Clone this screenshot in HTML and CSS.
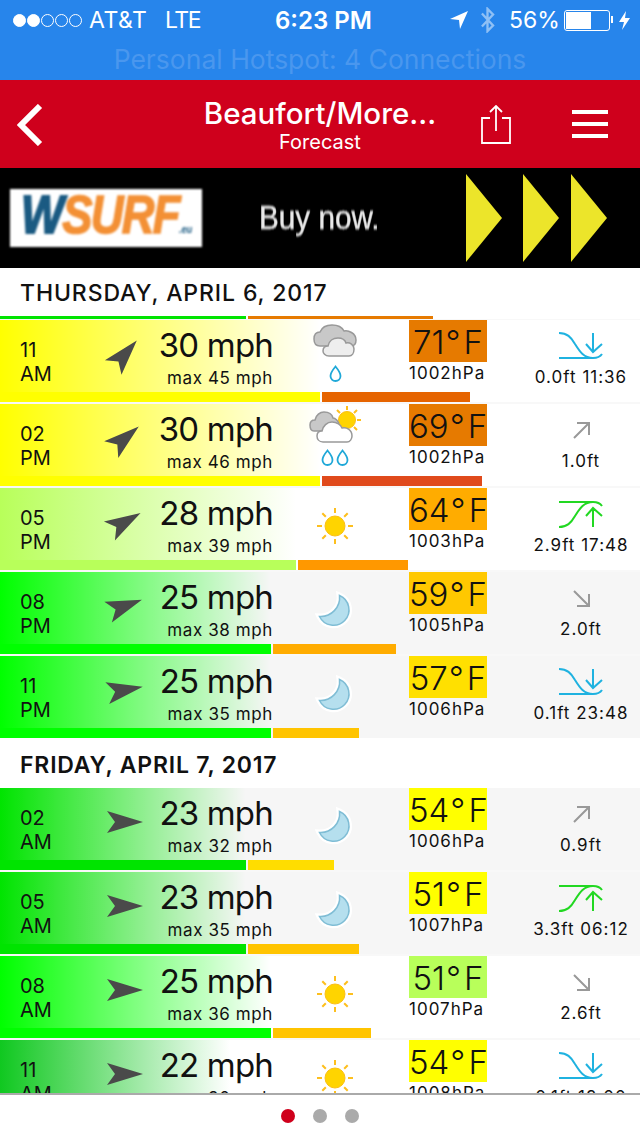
FILE: index.html
```html
<!DOCTYPE html>
<html lang="en">
<head>
    <meta charset="UTF-8">
    <meta name="viewport" content="width=device-width, initial-scale=1.0">
    <title>Forecast</title>
    <link rel="stylesheet" href="styles.css">
</head>
<body>
<svg class="defs" width="0" height="0">
    <symbol id="wind-arrow" viewBox="-20 -20 40 40"><polygon points="18,0 -18,-11 -10,0 -18,11"/></symbol>
    <symbol id="sun" viewBox="-20 -20 40 40">
        <g class="rays"><path d="M0,-18V-13M0,18V13M-18,0H-13M18,0H13M-12.7,-12.7L-9.2,-9.2M12.7,12.7L9.2,9.2M-12.7,12.7L-9.2,9.2M12.7,-12.7L9.2,-9.2"/></g>
        <circle class="disk" r="10"/>
    </symbol>
    <symbol id="moon" viewBox="-20 -20 40 40">
        <path class="halo" d="M4.5,-14.5A15.5,15.5 0 1 1 -15.5,6.5A19,19 0 0 0 4.5,-14.5Z"/>
        <path class="crescent" d="M4.5,-14.5A15.5,15.5 0 1 1 -15.5,6.5A19,19 0 0 0 4.5,-14.5Z"/>
    </symbol>
    <symbol id="cloud" viewBox="0 0 44 33">
        <path class="cloud-back" d="M7,22C2,22 1,18 1,15C1,11 3,8 7,8C9,3 14,1 19,1C25,1 29,3 31,7C35,6 43,9 43,16C43,20 41,22 38,22Z"/>
        <path class="cloud-front" d="M16,32C12,32 10,29 10,27C10,24 12,22 15,22C16,17 20,14 25,14C29,14 32,16 33,19C37,18 41,21 41,25C41,29 39,32 36,32Z"/>
    </symbol>
    <symbol id="cloud-sun" viewBox="0 0 52 38">
        <path class="rays" d="M38,0V4M38,24V28M24,14H28M48,14H52M28,4L31,7M45,21L48,24M28,24L31,21M45,7L48,4"/>
        <circle class="disk" cx="38" cy="14" r="8.500"/>
        <path class="cloud-back" d="M5,25C2,25 1,22 1,19C1,16 3,14 6,14C7,9 11,6 15,6C19,6 23,8 24,12C26,12 30,15 30,19V25Z"/>
        <path class="cloud-white" d="M14,36C10,36 8,33 8,30C8,27 10,25 13,25C14,20 18,16 23,16C28,16 32,19 33,22C38,21 43,24 43,30C43,33 41,36 38,36Z"/>
    </symbol>
    <symbol id="drop" viewBox="0 0 13 17"><path d="M6.500,1.500C6.500,1.500 1.500,7.500 1.500,11A5,5 0 0 0 11.500,11C11.500,7.500 6.500,1.500 6.500,1.500Z"/></symbol>
    <symbol id="tide" viewBox="0 0 44 28"><path d="M0,1C8,1 12,5 16,12C21,20 25,26 34,26C38,26 41,25 43,22M0,26H34M34,1V20M27,12L34,20L43,12"/></symbol>
    <symbol id="tide-arrow" viewBox="0 0 17 17"><path d="M1,16L16,1M4,1H16V13"/></symbol>
</svg>

<header class="status">
    <div class="status-bar">
        <div class="signal"><i class="on"></i><i class="on"></i><i></i><i></i><i></i></div>
        <span class="carrier">AT&amp;T</span>
        <span class="net">LTE</span>
        <span class="clock">6:23 PM</span>
        <svg class="loc" viewBox="0 0 18 18"><polygon points="18,0 0,8 9,9 10,18"/></svg>
        <svg class="bt" viewBox="0 0 16 28"><path d="M2,7L14,20L8,26V2L14,8L2,21"/></svg>
        <span class="pct">56%</span>
        <div class="battery"><div class="battery-fill"></div></div>
        <svg class="bolt" viewBox="0 0 11 19"><polygon points="7,0 0,11 5,11 3,19 11,7 6,7"/></svg>
    </div>
    <div class="hotspot">Personal Hotspot: 4 Connections</div>
</header>

<nav class="nav">
    <svg class="back" viewBox="0 0 26 42"><path d="M23,2L4,21L23,40"/></svg>
    <div class="nav-title">
        <div class="nav-place">Beaufort/More...</div>
        <div class="nav-sub">Forecast</div>
    </div>
    <svg class="share" viewBox="0 0 30 39"><path d="M9,13H1V38H29V13H21M15,26V2M9,7L15,1L21,7"/></svg>
    <div class="menu"><i></i><i></i><i></i></div>
</nav>

<div class="ad">
    <div class="ad-logo">
        <div class="ad-word"><span class="ad-w">W</span><span class="ad-surf">SURF</span><span class="ad-eu">.eu</span></div>
    </div>
    <div class="ad-text">Buy now.</div>
    <div class="ad-arrows"><i></i><i></i><i></i></div>
</div>

<main class="list">
    <h2 class="day">THURSDAY, APRIL 6, 2017</h2>
    <div class="prev-bars"><i class="prev-wind"></i><i class="prev-temp"></i></div>

    <div class="row w-yellow" style="--wind:320px">
        <div class="row-body">
            <div class="time">11<br>AM</div>
            <svg class="arrow" style="transform:rotate(-49deg)"><use href="#wind-arrow"/></svg>
            <div class="wind"><div class="speed">30 mph</div><div class="gust">max 45 mph</div></div>
            <div class="weather">
                <svg class="ico-cloud"><use href="#cloud"/></svg>
                <div class="drops"><svg class="ico-drop"><use href="#drop"/></svg></div>
            </div>
            <div class="temp"><div class="temp-box h-71">71<i>°</i>F</div><div class="hpa">1002<span>hPa</span></div></div>
            <div class="tide"><div class="tide-ico"><svg class="ico-tide low"><use href="#tide"/></svg></div><div class="tide-txt">0.0<span>ft</span> 11:36</div></div>
        </div>
        <div class="bars"><i class="bar-wind"></i><i class="bar-temp b-red1" style="width:148px"></i></div>
    </div>

    <div class="row w-yellow" style="--wind:320px">
        <div class="row-body">
            <div class="time">02<br>PM</div>
            <svg class="arrow" style="transform:rotate(-40deg)"><use href="#wind-arrow"/></svg>
            <div class="wind"><div class="speed">30 mph</div><div class="gust">max 46 mph</div></div>
            <div class="weather">
                <svg class="ico-cloudsun"><use href="#cloud-sun"/></svg>
                <div class="drops two"><svg class="ico-drop"><use href="#drop"/></svg><svg class="ico-drop"><use href="#drop"/></svg></div>
            </div>
            <div class="temp"><div class="temp-box h-71">69<i>°</i>F</div><div class="hpa">1002<span>hPa</span></div></div>
            <div class="tide"><div class="tide-ico"><svg class="ico-dir"><use href="#tide-arrow"/></svg></div><div class="tide-txt">1.0<span>ft</span></div></div>
        </div>
        <div class="bars"><i class="bar-wind"></i><i class="bar-temp b-red2" style="width:160px"></i></div>
    </div>

    <div class="row w-lime" style="--wind:296px">
        <div class="row-body">
            <div class="time">05<br>PM</div>
            <svg class="arrow" style="transform:rotate(-30deg)"><use href="#wind-arrow"/></svg>
            <div class="wind"><div class="speed">28 mph</div><div class="gust">max 39 mph</div></div>
            <div class="weather"><svg class="ico-sun"><use href="#sun"/></svg></div>
            <div class="temp"><div class="temp-box h-64">64<i>°</i>F</div><div class="hpa">1003<span>hPa</span></div></div>
            <div class="tide"><div class="tide-ico"><svg class="ico-tide high"><use href="#tide"/></svg></div><div class="tide-txt">2.9<span>ft</span> 17:48</div></div>
        </div>
        <div class="bars"><i class="bar-wind"></i><i class="bar-temp b-orange" style="width:110px"></i></div>
    </div>

    <div class="row grey w-green" style="--wind:271px">
        <div class="row-body">
            <div class="time">08<br>PM</div>
            <svg class="arrow" style="transform:rotate(-20deg)"><use href="#wind-arrow"/></svg>
            <div class="wind"><div class="speed">25 mph</div><div class="gust">max 38 mph</div></div>
            <div class="weather"><svg class="ico-moon"><use href="#moon"/></svg></div>
            <div class="temp"><div class="temp-box h-59">59<i>°</i>F</div><div class="hpa">1005<span>hPa</span></div></div>
            <div class="tide"><div class="tide-ico"><svg class="ico-dir down"><use href="#tide-arrow"/></svg></div><div class="tide-txt">2.0<span>ft</span></div></div>
        </div>
        <div class="bars"><i class="bar-wind"></i><i class="bar-temp b-amber" style="width:123px"></i></div>
    </div>

    <div class="row grey w-green" style="--wind:271px">
        <div class="row-body">
            <div class="time">11<br>PM</div>
            <svg class="arrow" style="transform:rotate(-10deg)"><use href="#wind-arrow"/></svg>
            <div class="wind"><div class="speed">25 mph</div><div class="gust">max 35 mph</div></div>
            <div class="weather"><svg class="ico-moon"><use href="#moon"/></svg></div>
            <div class="temp"><div class="temp-box h-57">57<i>°</i>F</div><div class="hpa">1006<span>hPa</span></div></div>
            <div class="tide"><div class="tide-ico"><svg class="ico-tide low"><use href="#tide"/></svg></div><div class="tide-txt">0.1<span>ft</span> 23:48</div></div>
        </div>
        <div class="bars"><i class="bar-wind"></i><i class="bar-temp b-gold" style="width:86px"></i></div>
    </div>

    <h2 class="day friday">FRIDAY, APRIL 7, 2017</h2>

    <div class="row grey w-green2" style="--wind:246px">
        <div class="row-body">
            <div class="time">02<br>AM</div>
            <svg class="arrow"><use href="#wind-arrow"/></svg>
            <div class="wind"><div class="speed">23 mph</div><div class="gust">max 32 mph</div></div>
            <div class="weather"><svg class="ico-moon"><use href="#moon"/></svg></div>
            <div class="temp"><div class="temp-box h-54">54<i>°</i>F</div><div class="hpa">1006<span>hPa</span></div></div>
            <div class="tide"><div class="tide-ico"><svg class="ico-dir"><use href="#tide-arrow"/></svg></div><div class="tide-txt">0.9<span>ft</span></div></div>
        </div>
        <div class="bars"><i class="bar-wind"></i><i class="bar-temp b-yellow" style="width:86px"></i></div>
    </div>

    <div class="row grey w-green2" style="--wind:246px">
        <div class="row-body">
            <div class="time">05<br>AM</div>
            <svg class="arrow"><use href="#wind-arrow"/></svg>
            <div class="wind"><div class="speed">23 mph</div><div class="gust">max 35 mph</div></div>
            <div class="weather"><svg class="ico-moon"><use href="#moon"/></svg></div>
            <div class="temp"><div class="temp-box h-54">51<i>°</i>F</div><div class="hpa">1007<span>hPa</span></div></div>
            <div class="tide"><div class="tide-ico"><svg class="ico-tide high"><use href="#tide"/></svg></div><div class="tide-txt">3.3<span>ft</span> 06:12</div></div>
        </div>
        <div class="bars"><i class="bar-wind"></i><i class="bar-temp b-gold" style="width:111px"></i></div>
    </div>

    <div class="row w-green" style="--wind:271px">
        <div class="row-body">
            <div class="time">08<br>AM</div>
            <svg class="arrow"><use href="#wind-arrow"/></svg>
            <div class="wind"><div class="speed">25 mph</div><div class="gust">max 36 mph</div></div>
            <div class="weather"><svg class="ico-sun"><use href="#sun"/></svg></div>
            <div class="temp"><div class="temp-box h-51">51<i>°</i>F</div><div class="hpa">1007<span>hPa</span></div></div>
            <div class="tide"><div class="tide-ico"><svg class="ico-dir down"><use href="#tide-arrow"/></svg></div><div class="tide-txt">2.6<span>ft</span></div></div>
        </div>
        <div class="bars"><i class="bar-wind"></i><i class="bar-temp b-gold" style="width:98px"></i></div>
    </div>

    <div class="row w-green3" style="--wind:230px">
        <div class="row-body">
            <div class="time">11<br>AM</div>
            <svg class="arrow"><use href="#wind-arrow"/></svg>
            <div class="wind"><div class="speed">22 mph</div><div class="gust">max 30 mph</div></div>
            <div class="weather"><svg class="ico-sun"><use href="#sun"/></svg></div>
            <div class="temp"><div class="temp-box h-54">54<i>°</i>F</div><div class="hpa">1008<span>hPa</span></div></div>
            <div class="tide"><div class="tide-ico"><svg class="ico-tide low"><use href="#tide"/></svg></div><div class="tide-txt">0.1<span>ft</span> 12:00</div></div>
        </div>
    </div>
</main>

<footer class="pager"><i class="active"></i><i></i><i></i></footer>
</body>
</html>
```

FILE: styles.css
```css
body {
    margin: 0;
    padding: 0;
    width: 640px;
    height: 1136px;
    display: flex;
    flex-direction: column;
    overflow: hidden;
    background: #fff;
    font-family: Inter, "Liberation Sans", sans-serif;
    color: #111;
}
.defs {
    position: absolute;
}

/* status bar */
.status {
    height: 80px;
    flex: none;
    background: #2785eb;
    color: #fff;
}
.status-bar {
    height: 40px;
    display: flex;
    align-items: center;
    padding-left: 13px;
    font-size: 23px;
}
.signal {
    display: flex;
    gap: 1px;
    width: 76px;
}
.signal i {
    width: 11px;
    height: 11px;
    border: 1px solid #fff;
    border-radius: 50%;
}
.signal i.on {
    background: #fff;
}
.carrier {
    width: 76px;
    letter-spacing: .5px;
}
.net {
    width: 110px;
    letter-spacing: -1.500px;
}
.clock {
    font-weight: 600;
    font-size: 24px;
    width: 175px;
}
.loc {
    width: 18px;
    height: 18px;
    fill: #fff;
    margin-right: 12px;
}
.bt {
    width: 15px;
    height: 26px;
    fill: none;
    stroke: #8fc0f5;
    stroke-width: 2.500;
    margin-right: 14px;
}
.pct {
    width: 55px;
}
.battery {
    width: 42px;
    height: 17px;
    border: 1px solid #fff;
    border-radius: 3px;
    padding: 1px;
    position: relative;
    margin-right: 9px;
}
.battery-fill {
    width: 25px;
    height: 17px;
    background: #fff;
}
.battery::after {
    content: "";
    position: absolute;
    right: -4px;
    top: 5px;
    width: 2px;
    height: 7px;
    background: #fff;
}
.bolt {
    width: 11px;
    height: 19px;
    fill: #fff;
}
.hotspot {
    text-align: center;
    font-size: 26.500px;
    line-height: 38px;
    color: #4a97ee;
}

/* nav */
.nav {
    height: 88px;
    flex: none;
    background: #cf001c;
    color: #fff;
    display: flex;
    align-items: center;
}
.back {
    width: 26px;
    height: 42px;
    margin-left: 17px;
    margin-top: 2px;
    fill: none;
    stroke: #fff;
    stroke-width: 6;
}
.nav-title {
    width: 320px;
    margin-left: 117px;
    margin-top: 0;
    text-align: center;
}
.nav-place {
    font-size: 29.500px;
    font-weight: 500;
    line-height: 36px;
}
.nav-sub {
    font-size: 20px;
    line-height: 22px;
}
.share {
    width: 30px;
    height: 39px;
    margin-left: 1px;
    margin-right: 61px;
    fill: none;
    stroke: #fff;
    stroke-width: 1.800;
}
.menu {
    display: flex;
    flex-direction: column;
    gap: 8px;
}
.menu i {
    display: block;
    width: 36px;
    height: 4px;
    background: #fff;
}

/* ad */
.ad {
    height: 100px;
    flex: none;
    background: #000;
    display: flex;
    align-items: center;
}
.ad-logo {
    width: 192px;
    height: 58px;
    margin-left: 10px;
    flex: none;
    box-sizing: border-box;
    padding: 4px 0 0 11px;
    background: #fff;
    font-family: "Liberation Sans", sans-serif;
    font-weight: 700;
    font-style: italic;
    white-space: nowrap;
    filter: blur(1px);
}
.ad-word {
    font-size: 54px;
    line-height: 42px;
    letter-spacing: -2px;
    transform: scaleX(.84);
    transform-origin: left center;
}
.ad-w {
    color: #1a5a82;
    -webkit-text-stroke: 2px #1a5a82;
}
.ad-surf {
    color: #f39035;
    -webkit-text-stroke: 1.500px #f39035;
}
.ad-eu {
    font-size: 11px;
    letter-spacing: 0;
    color: #1a5a82;
}
.ad-text {
    margin-left: 57px;
    width: 207px;
    flex: none;
    color: #e8e8e8;
    font-family: "Liberation Sans", sans-serif;
    font-size: 33px;
    white-space: nowrap;
    transform: scaleX(.9);
    transform-origin: left center;
    -webkit-text-stroke: .4px #e8e8e8;
    filter: blur(.8px);
}
.ad-arrows {
    display: flex;
    filter: blur(.6px);
}
.ad-arrows i {
    display: block;
    width: 0;
    height: 0;
    border-left: 36px solid #ece52a;
    border-top: 44px solid transparent;
    border-bottom: 44px solid transparent;
    margin-right: 21px;
}
.ad-arrows i:last-child {
    margin-left: -9px;
}

/* list */
.list {
    flex: 1;
    min-height: 0;
    overflow: hidden;
    background: #f8f8f8;
}
.day {
    margin: 0;
    height: 48px;
    padding-left: 20px;
    background: #fff;
    font-size: 23px;
    font-weight: 500;
    letter-spacing: .9px;
    line-height: 50px;
}
.friday {
    height: 50px;
    margin-top: -2px;
    line-height: 54px;
    font-weight: 600;
    letter-spacing: .8px;
}
.prev-bars {
    display: flex;
    gap: 2px;
    height: 3px;
    margin-bottom: 1px;
    background: #fff;
}
.prev-bars i {
    display: block;
}
.prev-wind {
    width: 246px;
    background: #00e400;
}
.prev-temp {
    width: 185px;
    background: #e67a00;
}
.row {
    height: 82px;
    margin-bottom: 2px;
    background: linear-gradient(90deg, var(--c), rgba(255, 255, 255, 0) var(--wind)), #fff;
}
.row.grey {
    background: linear-gradient(90deg, var(--c), rgba(246, 246, 246, 0) var(--wind)), #f6f6f6;
}
.w-yellow {
    --c: #ffff00;
}
.w-lime {
    --c: #b8ff5a;
}
.w-green {
    --c: #00ff00;
}
.w-green2 {
    --c: #00e400;
}
.w-green3 {
    --c: #10c820;
}
.row-body {
    height: 72px;
    display: grid;
    grid-template-columns: 105px 40px 128px 124px 90px 1fr;
}
.time {
    padding: 18px 0 0 20px;
    font-size: 20px;
    line-height: 24px;
}
.arrow {
    width: 40px;
    height: 40px;
    margin-top: 14px;
    fill: #4a4a4a;
}
.wind {
    text-align: right;
    padding-top: 7px;
    white-space: nowrap;
}
.speed {
    font-size: 33px;
    letter-spacing: -.8px;
    line-height: 36px;
}
.gust {
    margin-top: 5px;
    font-size: 17px;
    line-height: 20px;
    letter-spacing: .6px;
}
.weather {
    display: flex;
    flex-direction: column;
    align-items: center;
}
.ico-sun,
.ico-moon {
    width: 40px;
    height: 40px;
    margin-top: 18px;
}
.ico-cloud {
    width: 44px;
    height: 33px;
    margin-top: 4px;
}
.ico-cloudsun {
    width: 52px;
    height: 38px;
    margin-top: 2px;
}
.rays {
    fill: none;
    stroke: #fdbf1e;
    stroke-width: 2;
}
.disk {
    fill: #ffd400;
    stroke: #fbbf14;
}
.halo {
    fill: #fff;
    stroke: #fff;
    stroke-width: 6;
}
.crescent {
    fill: #b5dfee;
    stroke: #7fbdd5;
    stroke-width: 1.500;
}
.cloud-back {
    fill: #c8c8c8;
    stroke: #999;
    stroke-width: 1.500;
}
.cloud-front {
    fill: #eee;
    stroke: #999;
    stroke-width: 1.500;
}
.cloud-white {
    fill: #fff;
    stroke: #999;
    stroke-width: 1.500;
}
.drops {
    display: flex;
    gap: 2px;
    margin-top: 8px;
}
.drops.two {
    margin-top: 5px;
}
.ico-drop {
    width: 13px;
    height: 17px;
    fill: none;
    stroke: #1fa8d8;
    stroke-width: 1.800;
}
.temp {
    padding-left: 12px;
    white-space: nowrap;
}
.temp-box {
    width: 78px;
    height: 42px;
    text-align: center;
    font-size: 33px;
    line-height: 44px;
    font-weight: 300;
}
.temp-box i {
    font-style: normal;
    margin: 0 3px 0 1px;
}
.h-71 {
    background: #e67a00;
}
.h-64 {
    background: #ffac00;
}
.h-59 {
    background: #ffc800;
}
.h-57 {
    background: #ffe000;
}
.h-54 {
    background: #ffff00;
}
.h-51 {
    background: #b8ff5a;
}
.hpa {
    margin-top: 1px;
    font-size: 17px;
    line-height: 20px;
    letter-spacing: 1px;
}
.tide {
    padding: 12px 0 0 35px;
    text-align: center;
}
.tide-ico {
    height: 28px;
    display: flex;
    align-items: center;
    justify-content: center;
}
.ico-tide {
    width: 44px;
    height: 28px;
    fill: none;
    stroke: #1fb2e0;
    stroke-width: 2;
}
.ico-tide.high {
    stroke: #22d822;
    transform: scaleY(-1);
}
.ico-dir {
    width: 17px;
    height: 17px;
    fill: none;
    stroke: #999;
    stroke-width: 2;
}
.ico-dir.down {
    transform: rotate(90deg);
}
.tide-txt {
    margin-top: 7px;
    font-size: 17px;
    line-height: 20px;
    letter-spacing: 1px;
    white-space: nowrap;
}
.bars {
    display: flex;
    gap: 2px;
    height: 10px;
}
.bars i {
    display: block;
}
.bar-wind {
    width: var(--wind);
    background: var(--c);
}
.b-red1 {
    background: #e66400;
}
.b-red2 {
    background: #e04a1c;
}
.b-orange {
    background: #ff9800;
}
.b-amber {
    background: #ffac00;
}
.b-gold {
    background: #ffc400;
}
.b-yellow {
    background: #ffdd00;
}

/* pager */
.pager {
    height: 41px;
    flex: none;
    border-top: 2px solid #aaa;
    display: flex;
    justify-content: center;
    align-items: center;
    gap: 18px;
    background: #fff;
}
.pager i {
    width: 14px;
    height: 14px;
    border-radius: 50%;
    background: #aaa;
}
.pager i.active {
    background: #cf001c;
}
```
